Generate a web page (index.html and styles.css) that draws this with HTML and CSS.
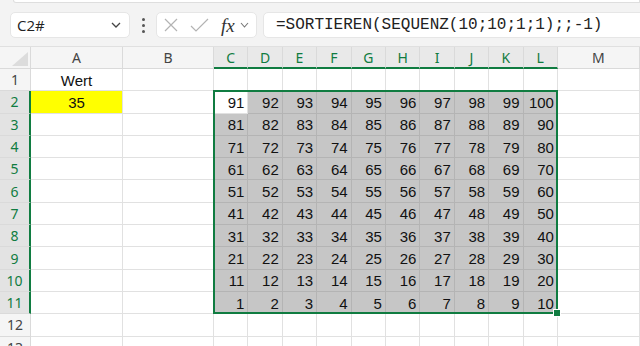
FILE: index.html
```html
<!DOCTYPE html>
<html lang="de">
<head>
  <meta charset="UTF-8">
  <meta name="viewport" content="width=device-width, initial-scale=1.0">
  <title>Mappe1 - Excel</title>
  <link rel="stylesheet" href="styles.css">
</head>
<body>
  <div class="toolbar">
    <div class="ribbon-edge"></div>
    <div class="formula-row">
      <div class="name-box">
        <span>C2#</span>
        <svg class="chev" width="10" height="6" viewBox="0 0 10 6"><path d="M1 1l4 4 4-4" fill="none" stroke="#444" stroke-width="1.3"/></svg>
      </div>
      <div class="dots"><i></i><i></i><i></i></div>
      <div class="fx-box">
        <svg width="14" height="14" viewBox="0 0 14 14"><path d="M1 1l12 12M13 1L1 13" stroke="#b3b3b3" stroke-width="1.2" fill="none"/></svg>
        <svg width="19" height="14" viewBox="0 0 19 14"><path d="M1 8l5 5L18 1" stroke="#b3b3b3" stroke-width="1.2" fill="none"/></svg>
        <span class="fx">fx</span>
        <svg width="9" height="6" viewBox="0 0 9 6"><path d="M1 1l3.5 4L8 1" fill="none" stroke="#777" stroke-width="1.1"/></svg>
      </div>
      <div class="formula">=SORTIEREN(SEQUENZ(10;10;1;1);;-1)</div>
    </div>
  </div>

  <div class="sheet-wrap">
    <div class="sheet" id="sheet">
      <div class="corner"><div class="tri"></div></div>
    </div>
    <div class="sheet overlay">
      <div class="range"><span class="handle"></span></div>
    </div>
  </div>

  <script>
    const sheet = document.getElementById('sheet');
    const cols = ['A','B','C','D','E','F','G','H','I','J','K','L','M'];

    cols.forEach((c, i) => {
      const h = document.createElement('div');
      h.className = 'col-head' + (i >= 2 && i <= 11 ? ' active' : '');
      h.textContent = c;
      sheet.appendChild(h);
    });

    for (let r = 1; r <= 13; r++) {
      const rh = document.createElement('div');
      rh.className = 'row-head' + (r >= 2 && r <= 11 ? ' active' : '');
      rh.textContent = r;
      sheet.appendChild(rh);

      cols.forEach((c, i) => {
        const cell = document.createElement('div');
        cell.className = 'cell';
        if (r === 1 && i === 0) {
          cell.textContent = 'Wert';
          cell.classList.add('center');
        }
        if (r === 2 && i === 0) {
          cell.textContent = '35';
          cell.classList.add('center', 'yellow');
        }
        if (r >= 2 && r <= 11 && i >= 2 && i <= 11) {
          cell.textContent = (11 - r) * 10 + (i - 1);
          cell.classList.add('num');
          if (!(r === 2 && i === 2)) cell.classList.add('sel');
        }
        sheet.appendChild(cell);
      });
    }
  </script>
</body>
</html>
```

FILE: styles.css
```css
body {
  margin: 0;
  width: 640px;
  height: 346px;
  overflow: hidden;
  background: #fff;
  font-family: "Liberation Sans", Arial, sans-serif;
}
.toolbar {
  height: 47px;
  background: #f3f3f3;
  border-bottom: 1px solid #e0e0e0;
  box-sizing: border-box;
}
.ribbon-edge {
  height: 2px;
  margin-left: 13px;
  background: #fff;
  border: 1px solid #dedede;
  border-top: none;
  border-bottom-left-radius: 5px;
}
.formula-row {
  display: flex;
  align-items: center;
  margin-top: 9px;
  padding-left: 10px;
  height: 26px;
}
.name-box {
  width: 120px;
  height: 26px;
  box-sizing: border-box;
  background: #fff;
  border-radius: 5px;
  border: 1px solid #e6e6e6;
  display: flex;
  align-items: center;
  justify-content: space-between;
  padding: 0 8px 0 6px;
  font-family: "Open Sans", sans-serif;
  font-size: 15px;
  color: #222;
}
.dots {
  width: 26px;
  display: flex;
  flex-direction: column;
  align-items: center;
  gap: 3px;
}
.dots i {
  width: 3px;
  height: 3px;
  border-radius: 50%;
  background: #555;
}
.fx-box {
  width: 101px;
  height: 26px;
  box-sizing: border-box;
  background: #fff;
  border-radius: 5px;
  border: 1px solid #e6e6e6;
  display: flex;
  align-items: center;
  padding-left: 7px;
}
.fx-box svg:nth-child(2) {
  margin-left: 12px;
}
.fx {
  font-family: "Liberation Serif", serif;
  font-style: italic;
  font-size: 19px;
  color: #333;
  margin-left: 12px;
  margin-right: 5px;
  line-height: 1;
}
.formula {
  flex: 1;
  margin-left: 6px;
  margin-right: -10px;
  height: 26px;
  box-sizing: border-box;
  background: #fff;
  border-radius: 5px;
  border: 1px solid #e6e6e6;
  padding-left: 12px;
  font-family: "Liberation Mono", monospace;
  font-size: 16px;
  line-height: 24px;
  color: #222;
  white-space: nowrap;
}
.sheet-wrap {
  position: relative;
}
.sheet {
  display: grid;
  grid-template-columns: 31px 92px 91px repeat(10, 34.4px) 1fr;
  grid-template-rows: 22px repeat(13, 22.3px);
}
.overlay {
  position: absolute;
  inset: 0;
  pointer-events: none;
}
.corner {
  background: #f5f5f5;
  border-right: 1px solid #dadada;
  border-bottom: 1px solid #dadada;
  position: relative;
}
.tri {
  position: absolute;
  right: 2px;
  bottom: 2px;
  width: 0;
  height: 0;
  border-left: 16px solid transparent;
  border-bottom: 14px solid #dcdcdc;
}
.col-head, .row-head {
  background: #f5f5f5;
  font-family: "Noto Sans", sans-serif;
  font-size: 14px;
  color: #444;
  display: flex;
  align-items: center;
  justify-content: center;
  box-sizing: border-box;
  border-right: 1px solid #dadada;
  border-bottom: 1px solid #dadada;
}
.col-head.active {
  background: #e9e9e9;
  color: #107c41;
  border-bottom: 2px solid #107c41;
}
.row-head.active {
  background: #e3e3e3;
  color: #107c41;
  border-right: 2px solid #107c41;
}
.cell {
  box-sizing: border-box;
  border-right: 1px solid #e1e1e1;
  border-bottom: 1px solid #e1e1e1;
  font-size: 15px;
  color: #111;
  display: flex;
  align-items: center;
  padding: 1px 3px 0;
}
.center {
  justify-content: center;
}
.num {
  justify-content: flex-end;
}
.yellow {
  background: #ffff00;
}
.sel {
  background: #c6c6c6;
  border-color: #b4b4b4;
}
.range {
  grid-column: 4 / 14;
  grid-row: 3 / 13;
  margin: -1px 0 0 -1px;
  border: 2px solid #107c41;
  position: relative;
}
.handle {
  position: absolute;
  right: -5px;
  bottom: -5px;
  width: 6px;
  height: 6px;
  background: #107c41;
  border: 1px solid #fff;
}
```
